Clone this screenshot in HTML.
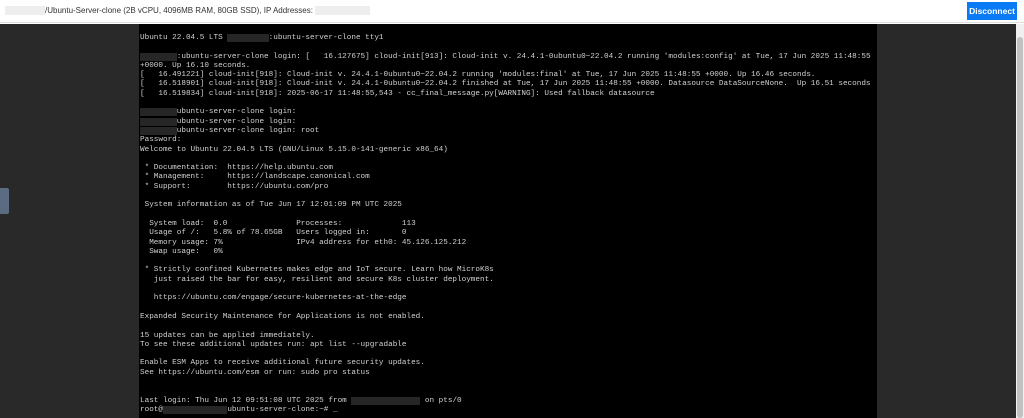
<!DOCTYPE html>
<html><head><style>
*{margin:0;padding:0;box-sizing:border-box}
body{width:1024px;height:418px;overflow:hidden;background:#fff;font-family:"Liberation Sans",sans-serif;position:relative}
#top{position:absolute;left:0;top:0;width:1024px;height:23px;background:#fff;border-bottom:1px solid #ddd}
#title{position:absolute;left:40px;top:6px;font-size:8px;color:#333;white-space:nowrap}
.blurw{display:inline-block;background:#eeeeee;height:9px;vertical-align:middle}
#btn{position:absolute;left:967px;top:2px;width:50px;height:18px;background:#0a7bf5;color:#fff;font-size:8.5px;line-height:18px;text-align:center;font-weight:bold}
#dark{position:absolute;left:0;top:24px;width:1016px;height:394px;background:#292929}
#sb{position:absolute;left:1016px;top:24px;width:8px;height:394px;background:#f0f0f0}
#sbt{position:absolute;left:1017px;top:37px;width:6px;height:381px;background:#c1c1c1;border-radius:3px}
#side{position:absolute;left:0;top:188px;width:9px;height:26px;background:#5a6b82;border-radius:0 2px 2px 0}
#term{position:absolute;left:139px;top:24px;width:738px;height:394px;background:#000;overflow:hidden}
pre{position:absolute;left:1px;top:10px;font-family:"Liberation Mono",monospace;font-size:7.67px;line-height:9.3px;color:#d2d2d2;white-space:pre}
.r{background:#262626;color:transparent}
</style></head><body>
<div id="top"><div id="title"><span class="blurw" style="width:40px;margin-left:-35px"></span>/Ubuntu-Server-clone (2B vCPU, 4096MB RAM, 80GB SSD), IP Addresses: <span class="blurw" style="width:55px"></span></div><div id="btn">Disconnect</div></div>
<div id="dark"></div>
<div id="side"></div>
<div id="sb"></div><div id="sbt"></div>
<div id="term"><pre>Ubuntu 22.04.5 LTS <span class="r">xxxxxxxxx</span>:ubuntu-server-clone tty1

<span class="r">xxxxxxxx</span>:ubuntu-server-clone login: [   16.127675] cloud-init[913]: Cloud-init v. 24.4.1-0ubuntu0~22.04.2 running 'modules:config' at Tue, 17 Jun 2025 11:48:55
+0000. Up 16.10 seconds.
[   16.491221] cloud-init[918]: Cloud-init v. 24.4.1-0ubuntu0~22.04.2 running 'modules:final' at Tue, 17 Jun 2025 11:48:55 +0000. Up 16.46 seconds.
[   16.518901] cloud-init[918]: Cloud-init v. 24.4.1-0ubuntu0~22.04.2 finished at Tue, 17 Jun 2025 11:48:55 +0000. Datasource DataSourceNone.  Up 16.51 seconds
[   16.519834] cloud-init[918]: 2025-06-17 11:48:55,543 - cc_final_message.py[WARNING]: Used fallback datasource

<span class="r">xxxxxxxx</span>ubuntu-server-clone login:
<span class="r">xxxxxxxx</span>ubuntu-server-clone login:
<span class="r">xxxxxxxx</span>ubuntu-server-clone login: root
Password:
Welcome to Ubuntu 22.04.5 LTS (GNU/Linux 5.15.0-141-generic x86_64)

 * Documentation:  https://help.ubuntu.com
 * Management:     https://landscape.canonical.com
 * Support:        https://ubuntu.com/pro

 System information as of Tue Jun 17 12:01:09 PM UTC 2025

  System load:  0.0               Processes:             113
  Usage of /:   5.8% of 78.65GB   Users logged in:       0
  Memory usage: 7%                IPv4 address for eth0: 45.126.125.212
  Swap usage:   0%

 * Strictly confined Kubernetes makes edge and IoT secure. Learn how MicroK8s
   just raised the bar for easy, resilient and secure K8s cluster deployment.

   https://ubuntu.com/engage/secure-kubernetes-at-the-edge

Expanded Security Maintenance for Applications is not enabled.

15 updates can be applied immediately.
To see these additional updates run: apt list --upgradable

Enable ESM Apps to receive additional future security updates.
See https://ubuntu.com/esm or run: sudo pro status


Last login: Thu Jun 12 09:51:08 UTC 2025 from <span class="r">xxxxxxxxxxxxxxx</span> on pts/0
root@<span class="r">xxxxxxxxxxxxxx</span>ubuntu-server-clone:~# _</pre></div>
</body></html>
